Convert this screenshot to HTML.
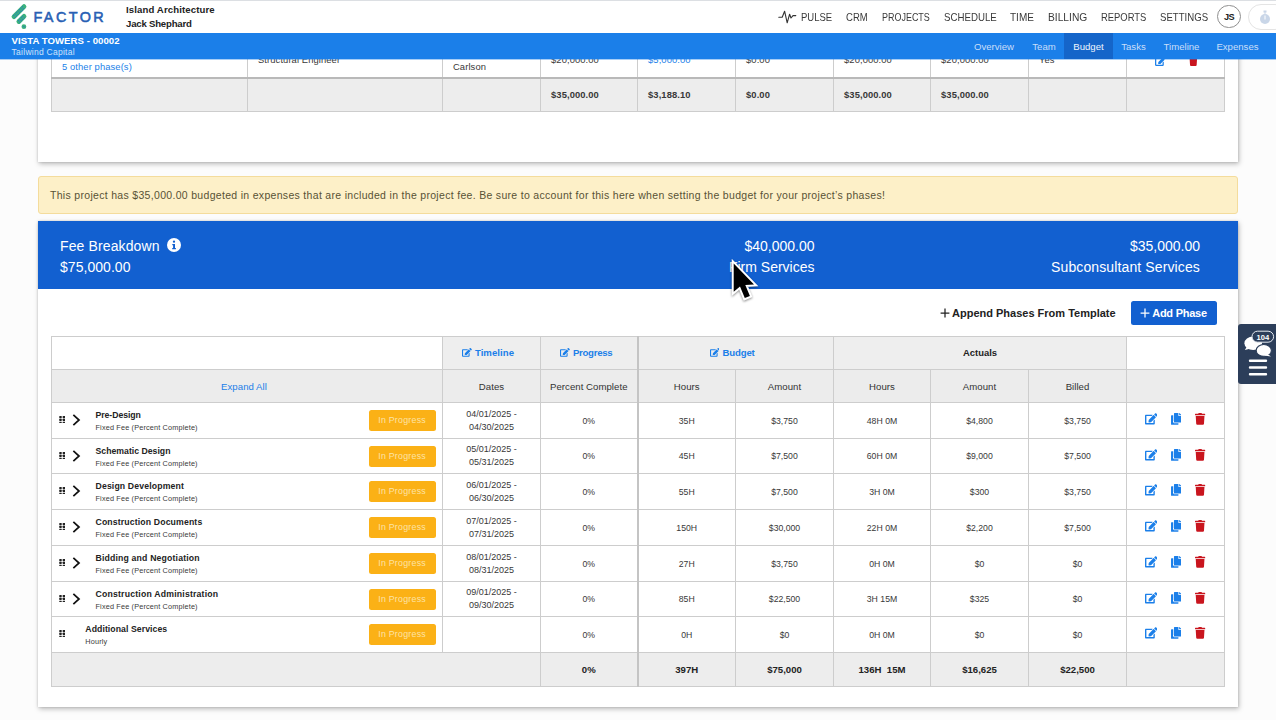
<!DOCTYPE html>
<html lang="en">
<head>
<meta charset="utf-8">
<title>Vista Towers - Budget</title>
<style>
*{box-sizing:border-box;margin:0;padding:0}
html,body{width:1276px;height:720px;overflow:hidden}
body{font-family:"Liberation Sans","DejaVu Sans",sans-serif;background:#fcfcfc;color:#222;position:relative;font-size:10px}
.abs{position:absolute}
#topnav{position:absolute;left:0;top:0;width:1276px;height:33px;background:#fff;box-shadow:inset 0 1px 0 #dcdfe3;z-index:5}
#topnav .org{position:absolute;left:126px;top:3px;font-weight:bold;font-size:9.6px;line-height:14px;color:#222;white-space:nowrap}
#topnav .menu{position:absolute;top:9.6px;font-size:11.4px;line-height:14px;color:#3a3a3a;white-space:nowrap;transform-origin:0 50%}
#bluebar{position:absolute;left:0;top:33px;width:1276px;height:27px;background:linear-gradient(to bottom,#1b7fe9 0,#1b7fe9 26px,rgba(27,127,233,.38) 26px,rgba(27,127,233,.38) 27px);z-index:5;color:#fff}
#bluebar .t1{position:absolute;left:11.6px;top:1.8px;font-weight:bold;font-size:9.6px;letter-spacing:.05px;line-height:12px;white-space:nowrap}
#bluebar .t2{position:absolute;left:11.6px;top:14px;font-size:8.5px;letter-spacing:.26px;line-height:10px;color:#cfe3fb;white-space:nowrap}
#bluebar .tab{position:absolute;top:0;height:26px;line-height:28px;font-size:9.6px;color:#c9def9;text-align:center;white-space:nowrap}
#bluebar .tab.act{background:#1565c9;color:#eef5fe;height:26.4px}
.card{position:absolute;left:38px;width:1200px;background:#fff;box-shadow:1px 2px 5px rgba(0,0,0,.26),0 0 2px rgba(0,0,0,.16)}
.cell{position:absolute;white-space:nowrap}
table{border-collapse:collapse;position:absolute;table-layout:fixed}
td{border:1px solid #cdcdcd;text-align:center;vertical-align:middle;font-size:9px;color:#383838;white-space:nowrap;overflow:hidden;padding:0}
.logo{font-size:14.4px;line-height:22px;letter-spacing:2.45px;color:#2860b4;-webkit-text-stroke:.55px #2860b4}
.avatar{width:23.4px;height:23.4px;border:1px solid #8f8f8f;border-radius:50%;text-align:center;line-height:23.4px;font-size:9.2px;letter-spacing:-.5px;font-weight:bold;color:#222}
.pill{width:40px;height:26.4px;border:1px solid #e4e4e4;border-radius:13.2px;background:#fff}
#top td{font-size:9.4px;letter-spacing:.1px}
#top .tf td{border-top:2px solid #b9b9b9}
#main td{font-size:8.7px}
#main .h1 td{background:#eeeeee;font-size:9.45px;color:#222;padding-bottom:2px}
#main .h1 td.lnk{color:#1b7fe9;font-size:9.6px;text-align:left}
#main .h2 td{background:#ececec;padding-top:1px;font-size:9.6px;letter-spacing:.05px;color:#333}
#main .h2 td.lnk{color:#1b7fe9;font-size:9.6px;padding-right:6px}
#main td.bl2{border-left:2px solid #c4c4c4}
#main .ft td{font-size:9.6px;color:#222}
svg.ed{width:9.8px;height:8.8px;fill:#1b7fe9;vertical-align:-1px;margin-right:3.1px}
td.ph{position:relative;text-align:left}
td.ph .grip{position:absolute;left:6.9px;top:12.6px;width:6.4px;height:7.8px;fill:#222}
td.ph .chev{position:absolute;left:20.3px;top:9.9px;width:9px;height:14px}
td.ph .nm{position:absolute;top:5.7px;font-weight:bold;font-size:8.7px;line-height:12px;color:#222}
td.ph .sb{position:absolute;top:19.5px;font-size:7.3px;letter-spacing:.16px;line-height:10px;color:#3a3a3a}
td.ph .badge{position:absolute;left:316.6px;top:7px;width:67px;height:21px;border-radius:2.5px;background:#fbb116;color:#fde3a6;font-size:8.8px;letter-spacing:.25px;line-height:21px;text-align:center}
#main td.dt{line-height:12.9px;font-size:9px}
td.act{position:relative}
td.act svg{position:absolute;top:10.2px;height:11.8px}
td.act .a1{left:17.6px;width:12.6px;fill:#1b7fe9}
td.act .a2{left:43.7px;width:10.4px;fill:#1b7fe9}
td.act .a3{left:68.3px;width:10.2px;fill:#c9151e}
.g{background:#ededed}
.b{font-weight:bold}
.lnk{color:#1b7fe9}
</style>
</head>
<body>
<!-- top navigation -->
<div id="topnav">
<svg class="abs" style="left:0;top:0" width="32" height="33" viewBox="0 0 32 33">
<g stroke-linecap="round" fill="none">
<line x1="14" y1="16.600" x2="24" y2="6.600" stroke="#3db27c" stroke-width="4.800"/>
<line x1="18.900" y1="21.500" x2="24" y2="16.400" stroke="#3db27c" stroke-width="4.800"/>
<g stroke="#1f74cf" stroke-width="1.150" stroke-dasharray="0.010 2.050">
<line x1="13.700" y1="15.500" x2="23.300" y2="5.900"/><line x1="15.100" y1="17.300" x2="24.700" y2="7.700"/>
<line x1="18.400" y1="20.600" x2="23.300" y2="15.700"/><line x1="19.800" y1="22.200" x2="24.700" y2="17.300"/>
</g></g>
<circle cx="23.900" cy="26.700" r="2.400" fill="#3db27c"/><circle cx="23.300" cy="26.400" r="0.500" fill="#1f74cf"/><circle cx="24.700" cy="27" r="0.500" fill="#1f74cf"/>
</svg>
<div class="abs logo" style="left:33.4px;top:5.7px">FACTOR</div>
<div class="org"><span style="letter-spacing:.12px">Island Architecture</span><br><span style="letter-spacing:-.2px">Jack Shephard</span></div>
<svg class="abs" style="left:778px;top:8px" width="19" height="17" viewBox="0 0 19 17"><path d="M0.800 9.200 H4.200 L6.600 3.200 L9.200 14.800 L11.600 6.200 L13 10 L15 7.600 L17.800 7.600" fill="none" stroke="#333" stroke-width="1.100" stroke-linejoin="round" stroke-linecap="round"/></svg>
<div class="menu" style="left:800.5px;transform:scaleX(0.835)">PULSE</div>
<div class="menu" style="left:845.8px;transform:scaleX(0.836)">CRM</div>
<div class="menu" style="left:881.9px;transform:scaleX(0.787)">PROJECTS</div>
<div class="menu" style="left:943.5px;transform:scaleX(0.850)">SCHEDULE</div>
<div class="menu" style="left:1010.3px;transform:scaleX(0.879)">TIME</div>
<div class="menu" style="left:1047.9px;transform:scaleX(0.898)">BILLING</div>
<div class="menu" style="left:1100.9px;transform:scaleX(0.826)">REPORTS</div>
<div class="menu" style="left:1159.5px;transform:scaleX(0.844)">SETTINGS</div>
<div class="abs avatar" style="left:1217.4px;top:5px">JS</div>
<div class="abs pill" style="left:1248px;top:3.5px"></div>
<svg class="abs" style="left:1258.6px;top:9.8px" width="12" height="15" viewBox="0 0 12 15"><circle cx="6" cy="9" r="5" fill="#c9d6e8"/><rect x="4.500" y="0.500" width="3" height="2" fill="#c9d6e8"/><rect x="5.500" y="2" width="1" height="2.500" fill="#c9d6e8"/><path d="M6 5.500V9.500" stroke="#fff" stroke-width="1"/></svg>
</div>
<div id="bluebar">
<div class="t1">VISTA TOWERS - 00002</div>
<div class="t2">Tailwind Capital</div>
<div class="tab" style="left:964px;width:60px">Overview</div>
<div class="tab" style="left:1024px;width:40px">Team</div>
<div class="tab act" style="left:1064px;width:49px">Budget</div>
<div class="tab" style="left:1113px;width:41px">Tasks</div>
<div class="tab" style="left:1154px;width:55px">Timeline</div>
<div class="tab" style="left:1209px;width:57px">Expenses</div>
</div>

<!-- first (scrolled) card -->
<div class="card" style="top:40px;height:122px"></div>
<table id="top" style="left:51px;top:39px;width:1174px">
<colgroup><col style="width:196px"><col style="width:195px"><col style="width:98px"><col style="width:97px"><col style="width:98px"><col style="width:98px"><col style="width:97px"><col style="width:98px"><col style="width:98px"><col style="width:98px"></colgroup>
<tr style="height:38px">
<td style="text-align:left;vertical-align:bottom;padding:0 0 5px 10px" class="lnk">5 other phase(s)</td>
<td style="text-align:left;vertical-align:top;padding:14.4px 0 0 10px">Structural Engineer</td>
<td style="text-align:left;vertical-align:bottom;padding:0 0 5px 10px">Carlson</td>
<td style="text-align:left;vertical-align:top;padding:14.4px 0 0 10px">$20,000.00</td>
<td style="text-align:left;vertical-align:top;padding:14.4px 0 0 10px" class="lnk">$5,000.00</td>
<td style="text-align:left;vertical-align:top;padding:14.4px 0 0 10px">$0.00</td>
<td style="text-align:left;vertical-align:top;padding:14.4px 0 0 10px">$20,000.00</td>
<td style="text-align:left;vertical-align:top;padding:14.4px 0 0 10px">$20,000.00</td>
<td style="text-align:left;vertical-align:top;padding:14.4px 0 0 10px">Yes</td>
<td style="position:relative"><svg style="position:absolute;left:27.500px;top:16px;width:11.300px;height:10px;fill:#1b7fe9" viewBox="0 0 576 512"><path d="M402.600 83.200l90.200 90.200c3.800 3.800 3.800 10 0 13.800L274.400 405.600l-92.800 10.300c-12.400 1.400-22.900-9.100-21.500-21.500l10.300-92.800L388.800 83.200c3.800-3.800 10-3.800 13.800 0zm162-22.900l-48.800-48.800c-15.200-15.200-39.900-15.200-55.200 0l-35.400 35.400c-3.800 3.800-3.800 10 0 13.800l90.200 90.200c3.800 3.800 10 3.800 13.800 0l35.400-35.400c15.200-15.300 15.200-40 0-55.200zM384 346.200V448H64V128h229.800c3.200 0 6.200-1.300 8.500-3.500l40-40c7.600-7.600 2.200-20.500-8.500-20.500H48C21.500 64 0 85.500 0 112v352c0 26.500 21.500 48 48 48h352c26.500 0 48-21.500 48-48V306.200c0-10.700-12.900-16-20.500-8.500l-40 40c-2.200 2.300-3.500 5.300-3.500 8.500z"/></svg><svg style="position:absolute;left:62px;top:16px;width:8.700px;height:10px;fill:#c9151e" viewBox="0 0 448 512"><path d="M432 32H312l-9.400-18.700A24 24 0 0 0 281.100 0H166.800a23.720 23.720 0 0 0-21.400 13.300L136 32H16A16 16 0 0 0 0 48v32a16 16 0 0 0 16 16h416a16 16 0 0 0 16-16V48a16 16 0 0 0-16-16zM53.200 467a48 48 0 0 0 47.900 45h245.800a48 48 0 0 0 47.900-45L416 128H32z"/></svg></td>
</tr>
<tr style="height:34px" class="g b tf">
<td></td><td></td><td></td>
<td style="text-align:left;padding-left:10px">$35,000.00</td>
<td style="text-align:left;padding-left:10px">$3,188.10</td>
<td style="text-align:left;padding-left:10px">$0.00</td>
<td style="text-align:left;padding-left:10px">$35,000.00</td>
<td style="text-align:left;padding-left:10px">$35,000.00</td>
<td></td><td></td>
</tr>
</table>

<!-- alert -->
<div class="abs" style="left:38px;top:176px;width:1200px;height:38px;background:#fdf0c8;border:1px solid #f4dc9c;border-radius:3px"></div>
<div class="cell" style="left:50px;top:188.2px;font-size:10.5px;letter-spacing:.31px;line-height:14px;color:#585235">This project has $35,000.00 budgeted in expenses that are included in the project fee. Be sure to account for this here when setting the budget for your project’s phases!</div>

<!-- fee breakdown card -->
<div class="card" style="top:221px;height:486px"></div>
<div class="abs" style="left:38px;top:221px;width:1200px;height:68.3px;background:#1260d0"></div>
<div class="cell" style="left:60px;top:236.8px;font-size:14px;letter-spacing:.12px;line-height:18px;color:#fff">Fee Breakdown</div>
<svg class="abs" style="left:166.800px;top:238px" width="14" height="14" viewBox="0 0 14 14"><circle cx="7" cy="7" r="7" fill="#fff"/><circle cx="7" cy="3.700" r="1.150" fill="#1260d0"/><path d="M5.300 6h2.700v4h.9v1.200H5.200V10h.9V7.200h-.8z" fill="#1260d0"/></svg>
<div class="cell" style="left:60px;top:257.5px;font-size:14px;letter-spacing:.04px;line-height:18px;color:#fff">$75,000.00</div>
<div class="cell" style="right:461.5px;top:236.8px;font-size:14px;letter-spacing:0;line-height:18px;color:#fff;text-align:right">$40,000.00</div>
<div class="cell" style="right:461.5px;top:257.5px;font-size:14px;letter-spacing:0;line-height:18px;color:#fff;text-align:right">Firm Services</div>
<div class="cell" style="right:76px;top:236.8px;font-size:14px;letter-spacing:0;line-height:18px;color:#fff;text-align:right">$35,000.00</div>
<div class="cell" style="right:76px;top:257.5px;font-size:14px;letter-spacing:.12px;line-height:18px;color:#fff;text-align:right">Subconsultant Services</div>

<svg class="abs" style="left:939.5px;top:308px" width="10" height="10" viewBox="0 0 10 10"><path d="M5 .6V9.400M.6 5H9.400" stroke="#222" stroke-width="1.250" fill="none"/></svg>
<div class="cell b" style="left:952px;top:306px;font-size:11px;line-height:14px;color:#222">Append Phases From Template</div>
<div class="abs" style="left:1130.5px;top:300.5px;width:86px;height:24px;background:#1260d0;border-radius:2.500px"></div>
<svg class="abs" style="left:1140px;top:308px" width="10" height="10" viewBox="0 0 10 10"><path d="M5 .6V9.400M.6 5H9.400" stroke="#fff" stroke-width="1.250" fill="none"/></svg>
<div class="cell b" style="left:1152.200px;top:306px;font-size:11px;letter-spacing:-.24px;line-height:14px;color:#fff">Add Phase</div>

<!-- main phases table -->
<table id="main" style="left:51px;top:336px;width:1174px">
<colgroup><col style="width:391px"><col style="width:98px"><col style="width:97px"><col style="width:98px"><col style="width:98px"><col style="width:97px"><col style="width:98px"><col style="width:98px"><col style="width:98px"></colgroup>
<tr style="height:33px" class="b h1"><td style="background:#fff"></td><td class="lnk" style="padding-left:19px"><svg class="ed" viewBox="0 0 576 512"><path d="M402.600 83.200l90.200 90.200c3.800 3.800 3.800 10 0 13.800L274.400 405.600l-92.800 10.300c-12.400 1.400-22.900-9.100-21.500-21.500l10.300-92.800L388.800 83.200c3.800-3.800 10-3.800 13.800 0zm162-22.900l-48.800-48.800c-15.200-15.200-39.900-15.200-55.200 0l-35.400 35.400c-3.800 3.800-3.800 10 0 13.800l90.200 90.200c3.800 3.800 10 3.800 13.800 0l35.400-35.400c15.200-15.300 15.200-40 0-55.200zM384 346.200V448H64V128h229.800c3.200 0 6.200-1.300 8.500-3.500l40-40c7.600-7.600 2.200-20.500-8.500-20.500H48C21.500 64 0 85.500 0 112v352c0 26.500 21.500 48 48 48h352c26.500 0 48-21.500 48-48V306.200c0-10.700-12.900-16-20.500-8.500l-40 40c-2.200 2.300-3.500 5.300-3.500 8.500z"/></svg><span style="letter-spacing:.06px">Timeline</span></td><td class="lnk" style="padding-left:19px"><svg class="ed" viewBox="0 0 576 512"><path d="M402.600 83.200l90.200 90.200c3.800 3.800 3.800 10 0 13.800L274.400 405.600l-92.800 10.300c-12.400 1.400-22.900-9.100-21.500-21.500l10.300-92.800L388.800 83.200c3.800-3.800 10-3.800 13.800 0zm162-22.900l-48.800-48.800c-15.200-15.200-39.900-15.200-55.200 0l-35.400 35.400c-3.800 3.800-3.800 10 0 13.800l90.200 90.200c3.800 3.800 10 3.800 13.800 0l35.400-35.400c15.200-15.300 15.200-40 0-55.200zM384 346.200V448H64V128h229.800c3.200 0 6.200-1.300 8.500-3.500l40-40c7.600-7.600 2.200-20.500-8.500-20.500H48C21.500 64 0 85.500 0 112v352c0 26.500 21.500 48 48 48h352c26.500 0 48-21.500 48-48V306.200c0-10.700-12.900-16-20.500-8.500l-40 40c-2.200 2.300-3.500 5.300-3.500 8.500z"/></svg><span style="letter-spacing:-.26px">Progress</span></td><td colspan="2" class="lnk bl2" style="padding-left:71px"><svg class="ed" viewBox="0 0 576 512"><path d="M402.600 83.200l90.200 90.200c3.800 3.800 3.800 10 0 13.800L274.400 405.600l-92.800 10.300c-12.400 1.400-22.900-9.100-21.500-21.500l10.300-92.800L388.800 83.200c3.800-3.800 10-3.800 13.800 0zm162-22.900l-48.800-48.800c-15.200-15.200-39.900-15.200-55.200 0l-35.400 35.400c-3.800 3.800-3.800 10 0 13.800l90.200 90.200c3.800 3.800 10 3.800 13.800 0l35.400-35.400c15.200-15.300 15.200-40 0-55.200zM384 346.200V448H64V128h229.800c3.200 0 6.200-1.300 8.500-3.500l40-40c7.600-7.600 2.200-20.500-8.500-20.500H48C21.500 64 0 85.500 0 112v352c0 26.500 21.500 48 48 48h352c26.500 0 48-21.500 48-48V306.200c0-10.700-12.900-16-20.500-8.500l-40 40c-2.200 2.300-3.500 5.300-3.500 8.500z"/></svg><span style="letter-spacing:-.13px">Budget</span></td><td colspan="3">Actuals</td><td style="background:#fff"></td></tr>
<tr style="height:33px" class="h2"><td class="lnk">Expand All</td><td>Dates</td><td>Percent Complete</td><td class="bl2">Hours</td><td>Amount</td><td>Hours</td><td>Amount</td><td>Billed</td><td></td></tr>
<tr style="height:36px"><td class="ph"><svg class="grip" viewBox="0 0 6 8"><g><rect x="0" y="0" width="2.500" height="2.200" rx=".4"/><rect x="3.500" y="0" width="2.500" height="2.200" rx=".4"/><rect x="0" y="2.900" width="2.500" height="2.200" rx=".4"/><rect x="3.500" y="2.900" width="2.500" height="2.200" rx=".4"/><rect x="0" y="5.800" width="2.500" height="2.200" rx=".4"/><rect x="3.500" y="5.800" width="2.500" height="2.200" rx=".4"/></g></svg><svg class="chev" viewBox="0 0 10 14"><path d="M1.500 1.200 L7.800 7 L1.500 12.800" fill="none" stroke="#111" stroke-width="1.900" stroke-linecap="butt" stroke-linejoin="miter"/></svg><span class="nm" style="left:43.5px;letter-spacing:-0.05px">Pre-Design</span><span class="sb" style="left:43.5px">Fixed Fee (Percent Complete)</span><span class="badge">In Progress</span></td><td class="dt">04/01/2025 -<br>04/30/2025</td><td>0%</td><td class="bl2">35H</td><td>$3,750</td><td>48H 0M</td><td>$4,800</td><td>$3,750</td><td class="act"><svg class="a1" viewBox="0 0 576 512"><path d="M402.600 83.200l90.200 90.200c3.800 3.800 3.800 10 0 13.800L274.400 405.600l-92.800 10.300c-12.400 1.400-22.900-9.100-21.500-21.500l10.300-92.800L388.800 83.200c3.800-3.800 10-3.800 13.800 0zm162-22.900l-48.800-48.800c-15.200-15.200-39.900-15.200-55.200 0l-35.400 35.400c-3.800 3.800-3.800 10 0 13.800l90.200 90.200c3.800 3.800 10 3.800 13.800 0l35.400-35.400c15.200-15.300 15.200-40 0-55.200zM384 346.200V448H64V128h229.800c3.200 0 6.200-1.300 8.500-3.500l40-40c7.600-7.600 2.200-20.500-8.500-20.500H48C21.500 64 0 85.500 0 112v352c0 26.500 21.500 48 48 48h352c26.500 0 48-21.500 48-48V306.200c0-10.700-12.900-16-20.500-8.500l-40 40c-2.200 2.300-3.500 5.300-3.500 8.500z"/></svg><svg class="a2" viewBox="0 0 448 512"><path d="M320 448v40c0 13.255-10.745 24-24 24H24c-13.255 0-24-10.745-24-24V120c0-13.255 10.745-24 24-24h72v296c0 30.879 25.121 56 56 56h168zm0-344V0H152c-13.255 0-24 10.745-24 24v368c0 13.255 10.745 24 24 24h272c13.255 0 24-10.745 24-24V128H344c-13.200 0-24-10.800-24-24zm120.971-31.029L375.029 7.029A24 24 0 0 0 358.059 0H352v96h96v-6.059a24 24 0 0 0-7.029-16.970z"/></svg><svg class="a3" viewBox="0 0 448 512"><path d="M432 32H312l-9.400-18.700A24 24 0 0 0 281.100 0H166.800a23.720 23.720 0 0 0-21.400 13.300L136 32H16A16 16 0 0 0 0 48v32a16 16 0 0 0 16 16h416a16 16 0 0 0 16-16V48a16 16 0 0 0-16-16zM53.200 467a48 48 0 0 0 47.900 45h245.800a48 48 0 0 0 47.900-45L416 128H32z"/></svg></td></tr>
<tr style="height:35px"><td class="ph"><svg class="grip" viewBox="0 0 6 8"><g><rect x="0" y="0" width="2.500" height="2.200" rx=".4"/><rect x="3.500" y="0" width="2.500" height="2.200" rx=".4"/><rect x="0" y="2.900" width="2.500" height="2.200" rx=".4"/><rect x="3.500" y="2.900" width="2.500" height="2.200" rx=".4"/><rect x="0" y="5.800" width="2.500" height="2.200" rx=".4"/><rect x="3.500" y="5.800" width="2.500" height="2.200" rx=".4"/></g></svg><svg class="chev" viewBox="0 0 10 14"><path d="M1.500 1.200 L7.800 7 L1.500 12.800" fill="none" stroke="#111" stroke-width="1.900" stroke-linecap="butt" stroke-linejoin="miter"/></svg><span class="nm" style="left:43.5px;letter-spacing:0.01px">Schematic Design</span><span class="sb" style="left:43.5px">Fixed Fee (Percent Complete)</span><span class="badge">In Progress</span></td><td class="dt">05/01/2025 -<br>05/31/2025</td><td>0%</td><td class="bl2">45H</td><td>$7,500</td><td>60H 0M</td><td>$9,000</td><td>$7,500</td><td class="act"><svg class="a1" viewBox="0 0 576 512"><path d="M402.600 83.200l90.200 90.200c3.800 3.800 3.800 10 0 13.800L274.400 405.600l-92.800 10.300c-12.400 1.400-22.900-9.100-21.500-21.500l10.300-92.800L388.800 83.200c3.800-3.800 10-3.800 13.800 0zm162-22.900l-48.800-48.800c-15.200-15.200-39.900-15.200-55.200 0l-35.400 35.400c-3.800 3.800-3.800 10 0 13.800l90.200 90.200c3.800 3.800 10 3.800 13.800 0l35.400-35.400c15.200-15.300 15.200-40 0-55.200zM384 346.200V448H64V128h229.800c3.200 0 6.200-1.300 8.500-3.500l40-40c7.600-7.600 2.200-20.500-8.500-20.500H48C21.500 64 0 85.500 0 112v352c0 26.500 21.500 48 48 48h352c26.500 0 48-21.500 48-48V306.200c0-10.700-12.900-16-20.500-8.500l-40 40c-2.200 2.300-3.500 5.300-3.500 8.500z"/></svg><svg class="a2" viewBox="0 0 448 512"><path d="M320 448v40c0 13.255-10.745 24-24 24H24c-13.255 0-24-10.745-24-24V120c0-13.255 10.745-24 24-24h72v296c0 30.879 25.121 56 56 56h168zm0-344V0H152c-13.255 0-24 10.745-24 24v368c0 13.255 10.745 24 24 24h272c13.255 0 24-10.745 24-24V128H344c-13.200 0-24-10.800-24-24zm120.971-31.029L375.029 7.029A24 24 0 0 0 358.059 0H352v96h96v-6.059a24 24 0 0 0-7.029-16.970z"/></svg><svg class="a3" viewBox="0 0 448 512"><path d="M432 32H312l-9.400-18.700A24 24 0 0 0 281.100 0H166.800a23.720 23.720 0 0 0-21.400 13.300L136 32H16A16 16 0 0 0 0 48v32a16 16 0 0 0 16 16h416a16 16 0 0 0 16-16V48a16 16 0 0 0-16-16zM53.200 467a48 48 0 0 0 47.900 45h245.800a48 48 0 0 0 47.900-45L416 128H32z"/></svg></td></tr>
<tr style="height:36px"><td class="ph"><svg class="grip" viewBox="0 0 6 8"><g><rect x="0" y="0" width="2.500" height="2.200" rx=".4"/><rect x="3.500" y="0" width="2.500" height="2.200" rx=".4"/><rect x="0" y="2.900" width="2.500" height="2.200" rx=".4"/><rect x="3.500" y="2.900" width="2.500" height="2.200" rx=".4"/><rect x="0" y="5.800" width="2.500" height="2.200" rx=".4"/><rect x="3.500" y="5.800" width="2.500" height="2.200" rx=".4"/></g></svg><svg class="chev" viewBox="0 0 10 14"><path d="M1.500 1.200 L7.800 7 L1.500 12.800" fill="none" stroke="#111" stroke-width="1.900" stroke-linecap="butt" stroke-linejoin="miter"/></svg><span class="nm" style="left:43.5px;letter-spacing:0.14px">Design Development</span><span class="sb" style="left:43.5px">Fixed Fee (Percent Complete)</span><span class="badge">In Progress</span></td><td class="dt">06/01/2025 -<br>06/30/2025</td><td>0%</td><td class="bl2">55H</td><td>$7,500</td><td>3H 0M</td><td>$300</td><td>$3,750</td><td class="act"><svg class="a1" viewBox="0 0 576 512"><path d="M402.600 83.200l90.200 90.200c3.800 3.800 3.800 10 0 13.800L274.400 405.600l-92.800 10.300c-12.400 1.400-22.900-9.100-21.500-21.500l10.300-92.800L388.800 83.200c3.800-3.800 10-3.800 13.800 0zm162-22.900l-48.800-48.800c-15.200-15.200-39.900-15.200-55.200 0l-35.400 35.400c-3.800 3.800-3.800 10 0 13.800l90.200 90.200c3.800 3.800 10 3.800 13.800 0l35.400-35.400c15.200-15.300 15.200-40 0-55.200zM384 346.200V448H64V128h229.800c3.200 0 6.200-1.300 8.500-3.500l40-40c7.600-7.600 2.200-20.500-8.500-20.500H48C21.500 64 0 85.500 0 112v352c0 26.500 21.500 48 48 48h352c26.500 0 48-21.500 48-48V306.200c0-10.700-12.900-16-20.500-8.500l-40 40c-2.200 2.300-3.500 5.300-3.500 8.500z"/></svg><svg class="a2" viewBox="0 0 448 512"><path d="M320 448v40c0 13.255-10.745 24-24 24H24c-13.255 0-24-10.745-24-24V120c0-13.255 10.745-24 24-24h72v296c0 30.879 25.121 56 56 56h168zm0-344V0H152c-13.255 0-24 10.745-24 24v368c0 13.255 10.745 24 24 24h272c13.255 0 24-10.745 24-24V128H344c-13.200 0-24-10.800-24-24zm120.971-31.029L375.029 7.029A24 24 0 0 0 358.059 0H352v96h96v-6.059a24 24 0 0 0-7.029-16.970z"/></svg><svg class="a3" viewBox="0 0 448 512"><path d="M432 32H312l-9.400-18.700A24 24 0 0 0 281.100 0H166.800a23.720 23.720 0 0 0-21.400 13.300L136 32H16A16 16 0 0 0 0 48v32a16 16 0 0 0 16 16h416a16 16 0 0 0 16-16V48a16 16 0 0 0-16-16zM53.200 467a48 48 0 0 0 47.900 45h245.800a48 48 0 0 0 47.900-45L416 128H32z"/></svg></td></tr>
<tr style="height:36px"><td class="ph"><svg class="grip" viewBox="0 0 6 8"><g><rect x="0" y="0" width="2.500" height="2.200" rx=".4"/><rect x="3.500" y="0" width="2.500" height="2.200" rx=".4"/><rect x="0" y="2.900" width="2.500" height="2.200" rx=".4"/><rect x="3.500" y="2.900" width="2.500" height="2.200" rx=".4"/><rect x="0" y="5.800" width="2.500" height="2.200" rx=".4"/><rect x="3.500" y="5.800" width="2.500" height="2.200" rx=".4"/></g></svg><svg class="chev" viewBox="0 0 10 14"><path d="M1.500 1.200 L7.800 7 L1.500 12.800" fill="none" stroke="#111" stroke-width="1.900" stroke-linecap="butt" stroke-linejoin="miter"/></svg><span class="nm" style="left:43.5px;letter-spacing:0.14px">Construction Documents</span><span class="sb" style="left:43.5px">Fixed Fee (Percent Complete)</span><span class="badge">In Progress</span></td><td class="dt">07/01/2025 -<br>07/31/2025</td><td>0%</td><td class="bl2">150H</td><td>$30,000</td><td>22H 0M</td><td>$2,200</td><td>$7,500</td><td class="act"><svg class="a1" viewBox="0 0 576 512"><path d="M402.600 83.200l90.200 90.200c3.800 3.800 3.800 10 0 13.800L274.400 405.600l-92.800 10.300c-12.400 1.400-22.900-9.100-21.500-21.500l10.300-92.800L388.800 83.200c3.800-3.800 10-3.800 13.800 0zm162-22.900l-48.800-48.800c-15.200-15.200-39.900-15.200-55.200 0l-35.400 35.400c-3.800 3.800-3.800 10 0 13.800l90.200 90.200c3.800 3.800 10 3.800 13.800 0l35.400-35.400c15.200-15.300 15.200-40 0-55.200zM384 346.200V448H64V128h229.800c3.200 0 6.200-1.300 8.500-3.500l40-40c7.600-7.600 2.200-20.500-8.500-20.500H48C21.500 64 0 85.500 0 112v352c0 26.500 21.500 48 48 48h352c26.500 0 48-21.500 48-48V306.200c0-10.700-12.900-16-20.500-8.500l-40 40c-2.200 2.300-3.500 5.300-3.500 8.500z"/></svg><svg class="a2" viewBox="0 0 448 512"><path d="M320 448v40c0 13.255-10.745 24-24 24H24c-13.255 0-24-10.745-24-24V120c0-13.255 10.745-24 24-24h72v296c0 30.879 25.121 56 56 56h168zm0-344V0H152c-13.255 0-24 10.745-24 24v368c0 13.255 10.745 24 24 24h272c13.255 0 24-10.745 24-24V128H344c-13.200 0-24-10.800-24-24zm120.971-31.029L375.029 7.029A24 24 0 0 0 358.059 0H352v96h96v-6.059a24 24 0 0 0-7.029-16.970z"/></svg><svg class="a3" viewBox="0 0 448 512"><path d="M432 32H312l-9.400-18.700A24 24 0 0 0 281.100 0H166.800a23.720 23.720 0 0 0-21.400 13.300L136 32H16A16 16 0 0 0 0 48v32a16 16 0 0 0 16 16h416a16 16 0 0 0 16-16V48a16 16 0 0 0-16-16zM53.200 467a48 48 0 0 0 47.900 45h245.800a48 48 0 0 0 47.900-45L416 128H32z"/></svg></td></tr>
<tr style="height:36px"><td class="ph"><svg class="grip" viewBox="0 0 6 8"><g><rect x="0" y="0" width="2.500" height="2.200" rx=".4"/><rect x="3.500" y="0" width="2.500" height="2.200" rx=".4"/><rect x="0" y="2.900" width="2.500" height="2.200" rx=".4"/><rect x="3.500" y="2.900" width="2.500" height="2.200" rx=".4"/><rect x="0" y="5.800" width="2.500" height="2.200" rx=".4"/><rect x="3.500" y="5.800" width="2.500" height="2.200" rx=".4"/></g></svg><svg class="chev" viewBox="0 0 10 14"><path d="M1.500 1.200 L7.800 7 L1.500 12.800" fill="none" stroke="#111" stroke-width="1.900" stroke-linecap="butt" stroke-linejoin="miter"/></svg><span class="nm" style="left:43.5px;letter-spacing:0.17px">Bidding and Negotiation</span><span class="sb" style="left:43.5px">Fixed Fee (Percent Complete)</span><span class="badge">In Progress</span></td><td class="dt">08/01/2025 -<br>08/31/2025</td><td>0%</td><td class="bl2">27H</td><td>$3,750</td><td>0H 0M</td><td>$0</td><td>$0</td><td class="act"><svg class="a1" viewBox="0 0 576 512"><path d="M402.600 83.200l90.200 90.200c3.800 3.800 3.800 10 0 13.800L274.400 405.600l-92.800 10.300c-12.400 1.400-22.900-9.100-21.500-21.500l10.300-92.800L388.800 83.200c3.800-3.800 10-3.800 13.800 0zm162-22.900l-48.800-48.800c-15.200-15.200-39.900-15.200-55.200 0l-35.400 35.400c-3.800 3.800-3.800 10 0 13.800l90.200 90.200c3.800 3.800 10 3.800 13.800 0l35.400-35.400c15.200-15.300 15.200-40 0-55.200zM384 346.200V448H64V128h229.800c3.200 0 6.200-1.300 8.500-3.500l40-40c7.600-7.600 2.200-20.500-8.500-20.500H48C21.500 64 0 85.500 0 112v352c0 26.500 21.500 48 48 48h352c26.500 0 48-21.500 48-48V306.200c0-10.700-12.900-16-20.500-8.500l-40 40c-2.200 2.300-3.500 5.300-3.500 8.500z"/></svg><svg class="a2" viewBox="0 0 448 512"><path d="M320 448v40c0 13.255-10.745 24-24 24H24c-13.255 0-24-10.745-24-24V120c0-13.255 10.745-24 24-24h72v296c0 30.879 25.121 56 56 56h168zm0-344V0H152c-13.255 0-24 10.745-24 24v368c0 13.255 10.745 24 24 24h272c13.255 0 24-10.745 24-24V128H344c-13.200 0-24-10.800-24-24zm120.971-31.029L375.029 7.029A24 24 0 0 0 358.059 0H352v96h96v-6.059a24 24 0 0 0-7.029-16.970z"/></svg><svg class="a3" viewBox="0 0 448 512"><path d="M432 32H312l-9.400-18.700A24 24 0 0 0 281.100 0H166.800a23.720 23.720 0 0 0-21.400 13.300L136 32H16A16 16 0 0 0 0 48v32a16 16 0 0 0 16 16h416a16 16 0 0 0 16-16V48a16 16 0 0 0-16-16zM53.200 467a48 48 0 0 0 47.900 45h245.800a48 48 0 0 0 47.900-45L416 128H32z"/></svg></td></tr>
<tr style="height:35px"><td class="ph"><svg class="grip" viewBox="0 0 6 8"><g><rect x="0" y="0" width="2.500" height="2.200" rx=".4"/><rect x="3.500" y="0" width="2.500" height="2.200" rx=".4"/><rect x="0" y="2.900" width="2.500" height="2.200" rx=".4"/><rect x="3.500" y="2.900" width="2.500" height="2.200" rx=".4"/><rect x="0" y="5.800" width="2.500" height="2.200" rx=".4"/><rect x="3.500" y="5.800" width="2.500" height="2.200" rx=".4"/></g></svg><svg class="chev" viewBox="0 0 10 14"><path d="M1.500 1.200 L7.800 7 L1.500 12.800" fill="none" stroke="#111" stroke-width="1.900" stroke-linecap="butt" stroke-linejoin="miter"/></svg><span class="nm" style="left:43.5px;letter-spacing:0.20px">Construction Administration</span><span class="sb" style="left:43.5px">Fixed Fee (Percent Complete)</span><span class="badge">In Progress</span></td><td class="dt">09/01/2025 -<br>09/30/2025</td><td>0%</td><td class="bl2">85H</td><td>$22,500</td><td>3H 15M</td><td>$325</td><td>$0</td><td class="act"><svg class="a1" viewBox="0 0 576 512"><path d="M402.600 83.200l90.200 90.200c3.800 3.800 3.800 10 0 13.800L274.400 405.600l-92.800 10.300c-12.400 1.400-22.900-9.100-21.500-21.500l10.300-92.800L388.800 83.200c3.800-3.800 10-3.800 13.800 0zm162-22.900l-48.800-48.800c-15.200-15.200-39.900-15.200-55.200 0l-35.400 35.400c-3.800 3.800-3.800 10 0 13.800l90.200 90.200c3.800 3.800 10 3.800 13.800 0l35.400-35.400c15.200-15.300 15.200-40 0-55.200zM384 346.200V448H64V128h229.800c3.200 0 6.200-1.300 8.500-3.500l40-40c7.600-7.600 2.200-20.500-8.500-20.500H48C21.500 64 0 85.500 0 112v352c0 26.500 21.500 48 48 48h352c26.500 0 48-21.500 48-48V306.200c0-10.700-12.900-16-20.500-8.500l-40 40c-2.200 2.300-3.500 5.300-3.500 8.500z"/></svg><svg class="a2" viewBox="0 0 448 512"><path d="M320 448v40c0 13.255-10.745 24-24 24H24c-13.255 0-24-10.745-24-24V120c0-13.255 10.745-24 24-24h72v296c0 30.879 25.121 56 56 56h168zm0-344V0H152c-13.255 0-24 10.745-24 24v368c0 13.255 10.745 24 24 24h272c13.255 0 24-10.745 24-24V128H344c-13.200 0-24-10.800-24-24zm120.971-31.029L375.029 7.029A24 24 0 0 0 358.059 0H352v96h96v-6.059a24 24 0 0 0-7.029-16.970z"/></svg><svg class="a3" viewBox="0 0 448 512"><path d="M432 32H312l-9.400-18.700A24 24 0 0 0 281.100 0H166.800a23.720 23.720 0 0 0-21.400 13.300L136 32H16A16 16 0 0 0 0 48v32a16 16 0 0 0 16 16h416a16 16 0 0 0 16-16V48a16 16 0 0 0-16-16zM53.200 467a48 48 0 0 0 47.900 45h245.800a48 48 0 0 0 47.900-45L416 128H32z"/></svg></td></tr>
<tr style="height:36px"><td class="ph"><svg class="grip" viewBox="0 0 6 8"><g><rect x="0" y="0" width="2.500" height="2.200" rx=".4"/><rect x="3.500" y="0" width="2.500" height="2.200" rx=".4"/><rect x="0" y="2.900" width="2.500" height="2.200" rx=".4"/><rect x="3.500" y="2.900" width="2.500" height="2.200" rx=".4"/><rect x="0" y="5.800" width="2.500" height="2.200" rx=".4"/><rect x="3.500" y="5.800" width="2.500" height="2.200" rx=".4"/></g></svg><span class="nm" style="left:33.3px;letter-spacing:0.07px">Additional Services</span><span class="sb" style="left:33.3px">Hourly</span><span class="badge">In Progress</span></td><td></td><td>0%</td><td class="bl2">0H</td><td>$0</td><td>0H 0M</td><td>$0</td><td>$0</td><td class="act"><svg class="a1" viewBox="0 0 576 512"><path d="M402.600 83.200l90.200 90.200c3.800 3.800 3.800 10 0 13.800L274.400 405.600l-92.800 10.300c-12.400 1.400-22.900-9.100-21.500-21.500l10.300-92.800L388.800 83.200c3.800-3.800 10-3.800 13.800 0zm162-22.900l-48.800-48.800c-15.200-15.200-39.900-15.200-55.200 0l-35.400 35.400c-3.800 3.800-3.800 10 0 13.800l90.200 90.200c3.800 3.800 10 3.800 13.800 0l35.400-35.400c15.200-15.300 15.200-40 0-55.200zM384 346.200V448H64V128h229.800c3.200 0 6.200-1.300 8.500-3.500l40-40c7.600-7.600 2.200-20.500-8.500-20.500H48C21.500 64 0 85.500 0 112v352c0 26.500 21.500 48 48 48h352c26.500 0 48-21.500 48-48V306.200c0-10.700-12.900-16-20.500-8.500l-40 40c-2.200 2.300-3.500 5.300-3.500 8.500z"/></svg><svg class="a2" viewBox="0 0 448 512"><path d="M320 448v40c0 13.255-10.745 24-24 24H24c-13.255 0-24-10.745-24-24V120c0-13.255 10.745-24 24-24h72v296c0 30.879 25.121 56 56 56h168zm0-344V0H152c-13.255 0-24 10.745-24 24v368c0 13.255 10.745 24 24 24h272c13.255 0 24-10.745 24-24V128H344c-13.200 0-24-10.800-24-24zm120.971-31.029L375.029 7.029A24 24 0 0 0 358.059 0H352v96h96v-6.059a24 24 0 0 0-7.029-16.970z"/></svg><svg class="a3" viewBox="0 0 448 512"><path d="M432 32H312l-9.400-18.700A24 24 0 0 0 281.100 0H166.800a23.720 23.720 0 0 0-21.400 13.300L136 32H16A16 16 0 0 0 0 48v32a16 16 0 0 0 16 16h416a16 16 0 0 0 16-16V48a16 16 0 0 0-16-16zM53.200 467a48 48 0 0 0 47.900 45h245.800a48 48 0 0 0 47.900-45L416 128H32z"/></svg></td></tr>
<tr style="height:34px" class="g b ft"><td colspan="2"></td><td>0%</td><td class="bl2">397H</td><td>$75,000</td><td>136H&nbsp; 15M</td><td>$16,625</td><td>$22,500</td><td></td></tr>
</table>
<!-- chat widget -->
<div class="abs" style="left:1238px;top:324px;width:38px;height:60px;background:#2c3e5a;border-radius:3px 0 0 3px"></div>
<svg class="abs" style="left:1238px;top:323.6px" width="38" height="60" viewBox="0 0 38 60">
<ellipse cx="15.200" cy="19.200" rx="8.800" ry="6.700" fill="#fff"/><path d="M9 22.500 L6.800 26 L13 24.500z" fill="#fff"/>
<ellipse cx="25.800" cy="26.400" rx="7.600" ry="5.900" fill="#fff" stroke="#2c3e5a" stroke-width="1.100"/><path d="M29.500 30 L33 32.600 L26 31.600z" fill="#fff"/>
<g stroke="#fff" stroke-width="2.400" stroke-linecap="round"><path d="M12 36.700H28M12 43.500H28M12 50.200H28"/></g>
<rect x="14" y="7.200" width="21.600" height="11" rx="5.500" fill="#2c3e5a" stroke="#e8ecf2" stroke-width="1"/>
<text x="24.800" y="15.600" font-family="Liberation Sans, sans-serif" font-size="7.600" font-weight="bold" fill="#fff" text-anchor="middle">104</text>
</svg>
<!-- mouse cursor -->
<svg class="abs" style="left:725px;top:255px;z-index:9" width="40" height="52" viewBox="725 255 40 52"><path d="M733.700 263.600 L733.700 291.800 L740 286.400 L744.800 298.100 L749.900 296 L745.300 285 L754 284.600 Z" fill="#000" stroke="#fff" stroke-width="3.900" stroke-linejoin="miter" paint-order="stroke" style="filter:drop-shadow(.6px 1px .8px rgba(0,0,0,.45))"/></svg>
</body>
</html>
